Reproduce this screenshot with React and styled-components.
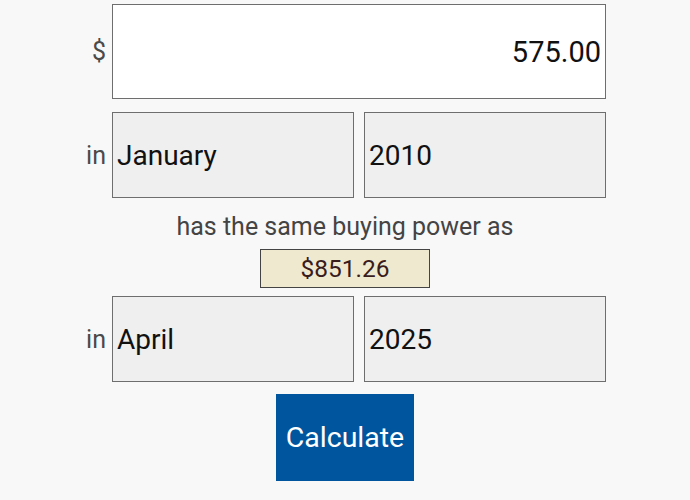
import React from 'react';
import styled, { createGlobalStyle } from 'styled-components';

const GlobalStyle = createGlobalStyle`
  html, body {
    margin: 0;
    padding: 0;
    background: #f8f8f8;
    font-family: Roboto, "Liberation Sans", sans-serif;
  }
`;

const Page = styled.div`
  width: 690px;
  height: 500px;
  display: flex;
  flex-direction: column;
  align-items: center;
  padding-top: 4px;
  box-sizing: border-box;
  overflow: hidden;
`;

const Row = styled.div`
  display: flex;
  align-items: center;
  width: 522px;
  gap: 6px;
  margin-bottom: ${(p) => p.$mb || 0}px;
`;

const Label = styled.span`
  width: 22px;
  text-align: right;
  font-size: 25px;
  color: #4a4a4a;
  white-space: nowrap;
`;

const Fields = styled.div`
  flex: 1;
  display: grid;
  grid-template-columns: ${(p) => (p.$single ? '1fr' : '1fr 1fr')};
  gap: 10px;
`;

const AmountBox = styled.div`
  height: 95px;
  box-sizing: border-box;
  border: 1.5px solid #6e6e6e;
  background: #fff;
  display: flex;
  align-items: center;
  justify-content: flex-end;
  padding-right: 4px;
  font-size: 29px;
  color: #111;
`;

const SelectBox = styled.div`
  height: 86px;
  box-sizing: border-box;
  border: 1.5px solid #6e6e6e;
  background: #efefef;
  display: flex;
  align-items: center;
  padding-left: 4px;
  font-size: 28px;
  color: #111;
`;

const Caption = styled.div`
  margin-top: 14px;
  font-size: 25px;
  color: #444;
  line-height: 30px;
`;

const Result = styled.div`
  margin-top: 7px;
  margin-bottom: 8px;
  width: 170px;
  height: 39px;
  box-sizing: border-box;
  border: 1px solid #444;
  background: #efe9d0;
  color: #3a1c1c;
  font-size: 24.5px;
  display: flex;
  align-items: center;
  justify-content: center;
`;

const Button = styled.button`
  margin-top: 12px;
  width: 138px;
  height: 87px;
  border: none;
  background: #00559f;
  color: #fff;
  font-family: Roboto, "Liberation Sans", sans-serif;
  font-size: 28.5px;
  padding: 0;
`;

const Period = ({ month, year }) => (
  <Row>
    <Label>in</Label>
    <Fields>
      <SelectBox>{month}</SelectBox>
      <SelectBox>{year}</SelectBox>
    </Fields>
  </Row>
);

export default function App() {
  return (
    <Page>
      <GlobalStyle />
      <Row $mb={13}>
        <Label>$</Label>
        <Fields $single>
          <AmountBox>575.00</AmountBox>
        </Fields>
      </Row>
      <Period month="January" year="2010" />
      <Caption>has the same buying power as</Caption>
      <Result>$851.26</Result>
      <Period month="April" year="2025" />
      <Button>Calculate</Button>
    </Page>
  );
}
